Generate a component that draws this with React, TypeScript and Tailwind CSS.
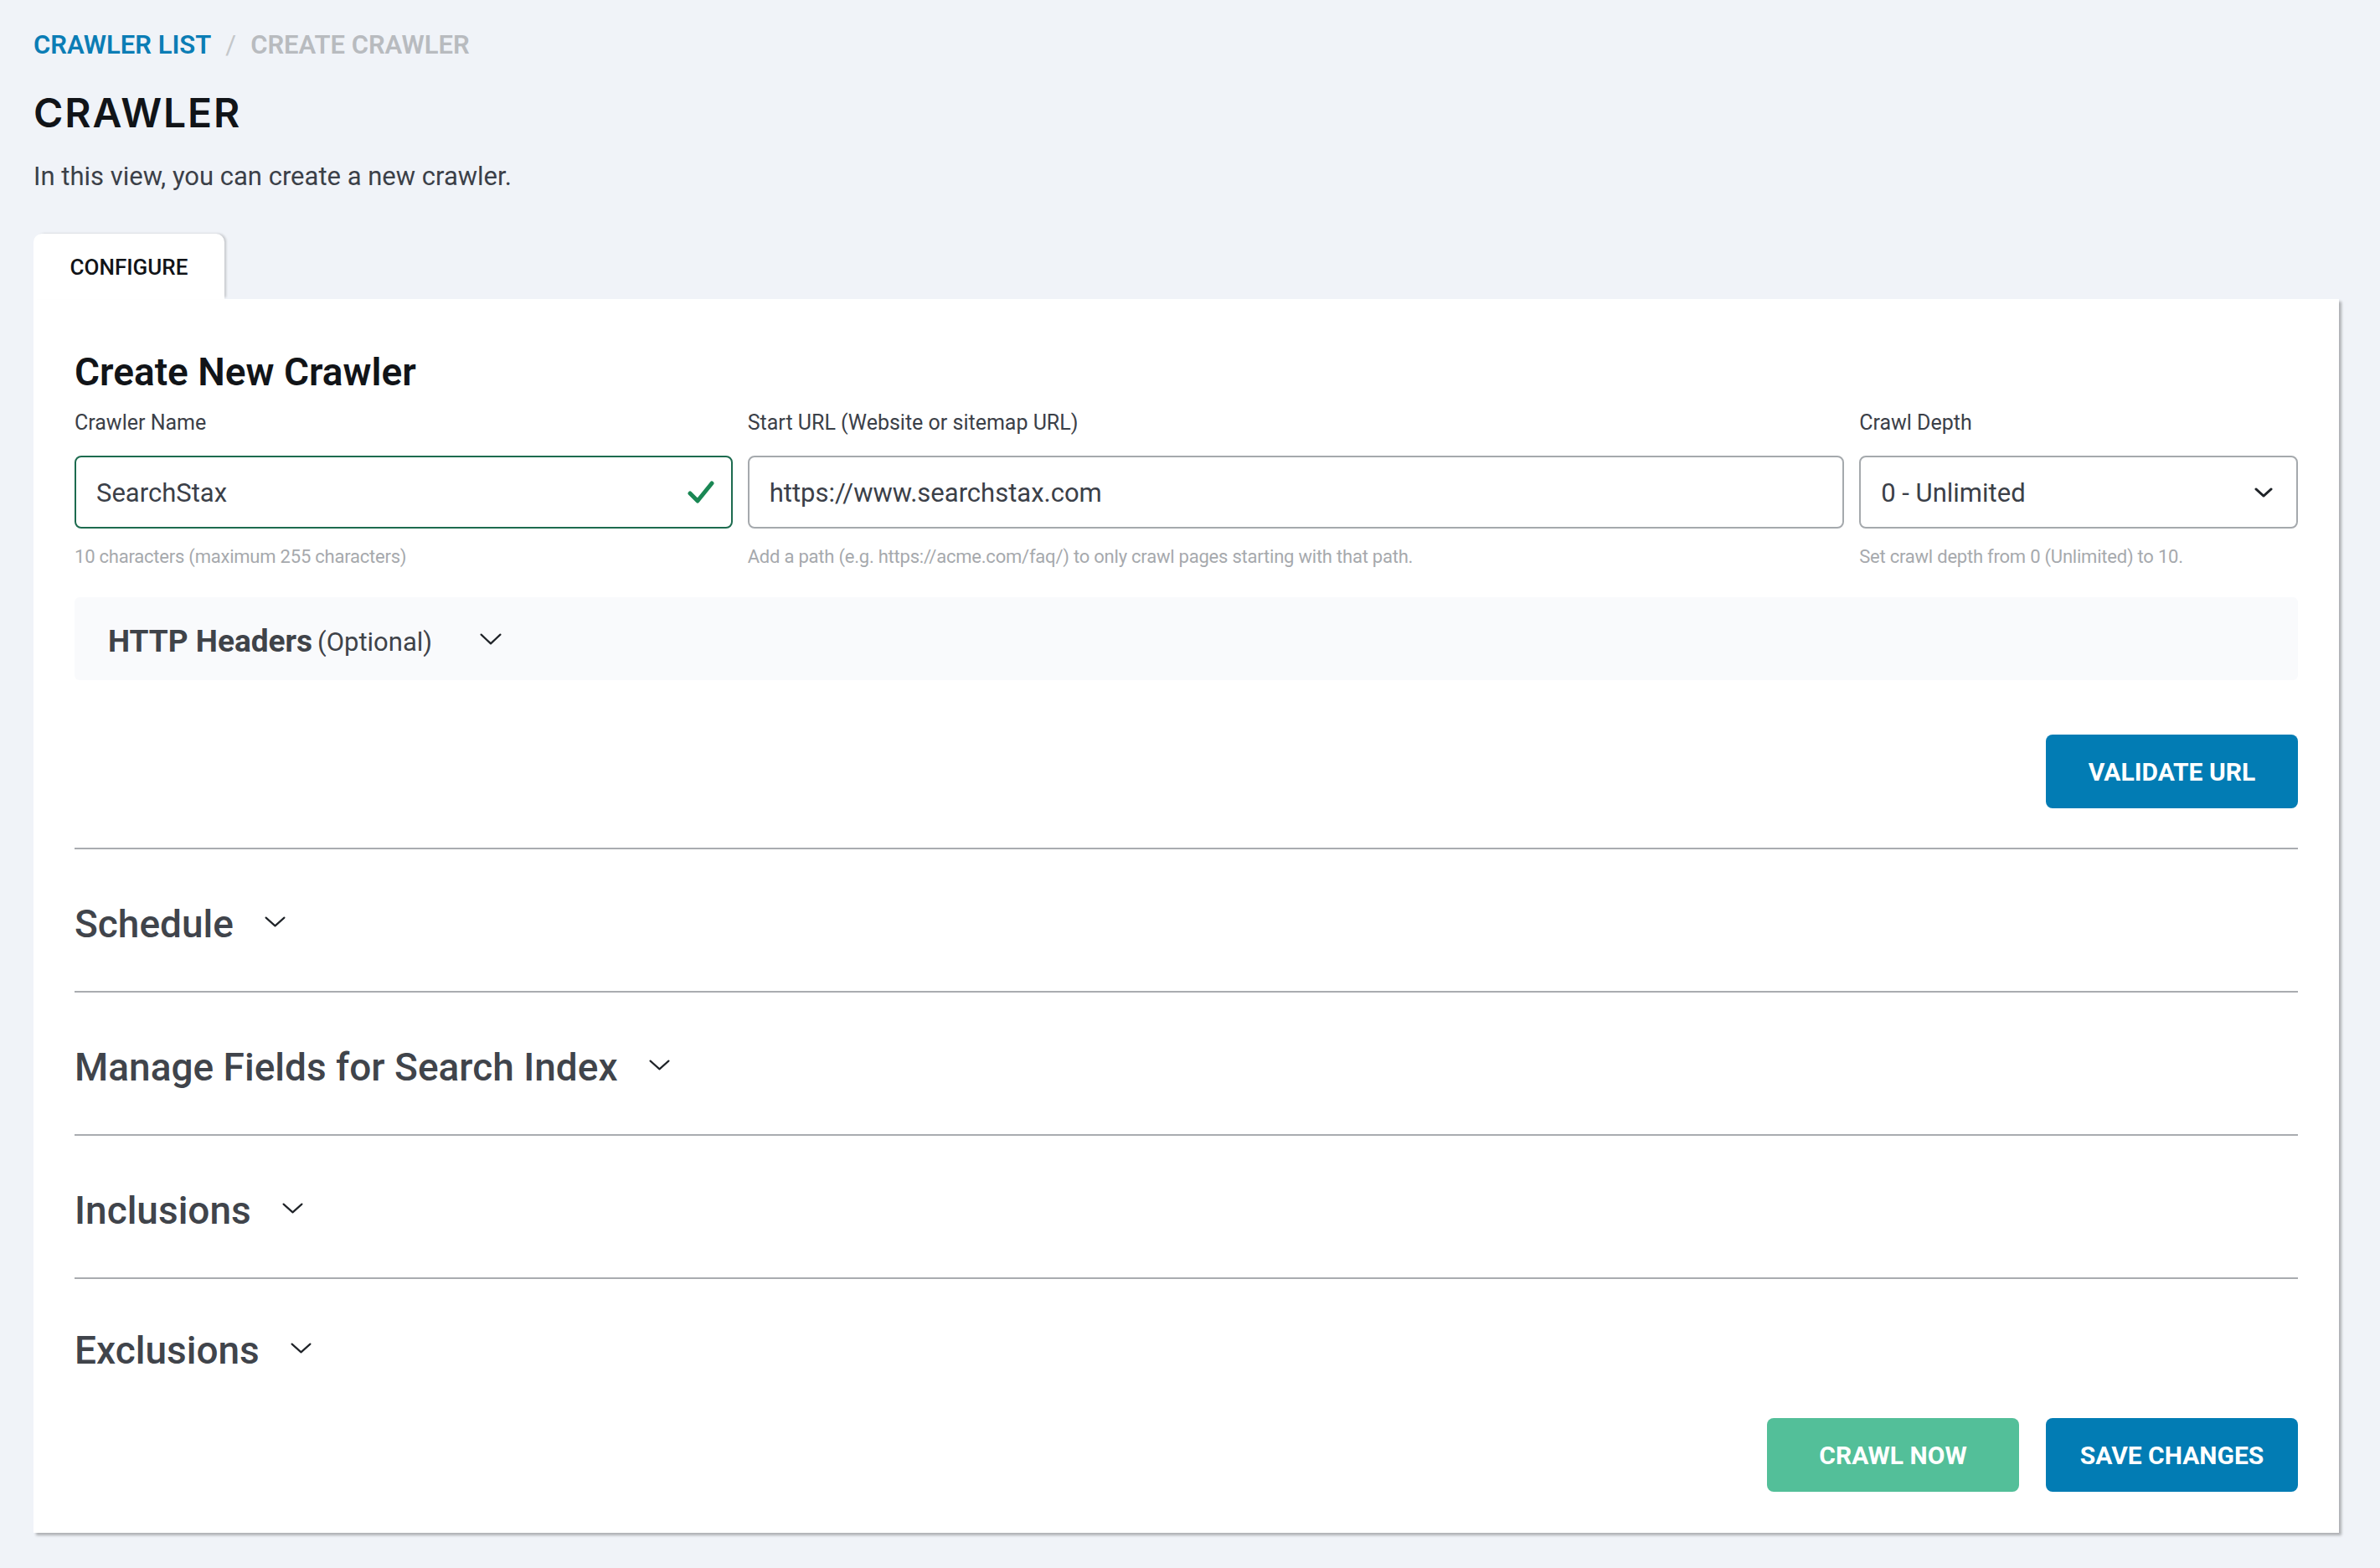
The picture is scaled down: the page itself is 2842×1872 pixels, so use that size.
import React from "react";

function Chevron({
  w = 25,
  h = 13,
  sw = 2.2,
  className = "",
}: {
  w?: number;
  h?: number;
  sw?: number;
  className?: string;
}) {
  const p = sw / 2 + 0.5;
  return (
    <svg width={w} height={h} viewBox={`0 0 ${w} ${h}`} fill="none" className={className}>
      <polyline
        points={`${p},${p} ${w / 2},${h - p} ${w - p},${p}`}
        stroke="currentColor"
        strokeWidth={sw}
        strokeLinecap="round"
        strokeLinejoin="round"
      />
    </svg>
  );
}

function Check() {
  return (
    <svg width="32" height="28" viewBox="0 0 32 28" fill="none">
      <polyline
        points="3,15 12,24 29,3"
        stroke="#1a8754"
        strokeWidth="5"
        strokeLinecap="round"
        strokeLinejoin="round"
      />
    </svg>
  );
}

function Field({
  label,
  helper,
  children,
}: {
  label: string;
  helper: string;
  children: React.ReactNode;
}) {
  return (
    <div className="flex flex-col min-w-0">
      <div className="text-[25px] leading-[25px] text-[#3b4048]">{label}</div>
      <div className="mt-[27px]">{children}</div>
      <div className="mt-[23px] text-[22px] leading-[22px] text-[#a6a9ad] whitespace-nowrap tracking-[-0.01em]">{helper}</div>
    </div>
  );
}

function Section({ title, last = false }: { title: string; last?: boolean }) {
  return (
    <div
      className={
        last
          ? "border-t-2 border-[#a9acb0] pt-[62px] flex items-center gap-[37px]"
          : "border-t-2 border-[#a9acb0] pt-[66px] pb-[57px] flex items-center gap-[37px]"
      }
    >
      <span className="text-[46px] leading-[46px] font-medium text-[#40444b]">{title}</span>
      <Chevron className="text-[#1f2328] mb-[6px]" />
    </div>
  );
}

export default function App() {
  return (
    <div className="min-h-screen bg-[#f0f3f8] pl-[40px] pr-[49px] pt-[38px] pb-[42px] font-[Roboto,sans-serif]">
      <nav className="flex items-center gap-[17px] text-[31px] leading-[31px] font-semibold uppercase">
        <span className="text-[#0b7db5]">Crawler List</span>
        <span className="text-[#c4c7ca] font-normal">/</span>
        <span className="text-[#b8bbbf]">Create Crawler</span>
      </nav>
      <h1 className="mt-[42px] font-[Inter,sans-serif] text-[48px] leading-[48px] font-semibold tracking-[0.04em] text-[#111418]">
        CRAWLER
      </h1>
      <p className="mt-[36px] text-[31px] leading-[31px] text-[#3b4048]">
        In this view, you can create a new crawler.
      </p>

      <div className="mt-[53px] flex">
        <div className="h-[78px] w-[228px] pt-[3px] rounded-t-[10px] bg-white flex items-center justify-center text-[26px] font-medium text-[#111418] shadow-[3px_-1px_3px_-1px_rgba(0,0,0,0.18)]">
          CONFIGURE
        </div>
      </div>

      <div className="bg-white shadow-[3px_3px_3px_rgba(0,0,0,0.28)] px-[49px] pt-[64px] pb-[49px]">
        <h2 className="text-[46px] leading-[46px] font-semibold text-[#111418]">Create New Crawler</h2>

        <div className="mt-[25px] grid grid-cols-[3fr_5fr_2fr] gap-x-[18px]">
          <Field label="Crawler Name" helper="10 characters (maximum 255 characters)">
            <div className="h-[87px] rounded-[8px] border-2 border-[#1d6b4f] flex items-center pl-[24px] pr-[20px]">
              <span className="flex-1 text-[31px] text-[#3b4048] pt-[4px]">SearchStax</span>
              <Check />
            </div>
          </Field>
          <Field
            label="Start URL (Website or sitemap URL)"
            helper="Add a path (e.g. https://acme.com/faq/) to only crawl pages starting with that path."
          >
            <div className="h-[87px] rounded-[8px] border-2 border-[#a5a9ad] flex items-center pl-[24px] pr-[20px]">
              <span className="text-[31px] text-[#3b4048] pt-[4px]">https://www.searchstax.com</span>
            </div>
          </Field>
          <Field label="Crawl Depth" helper="Set crawl depth from 0 (Unlimited) to 10.">
            <div className="h-[87px] rounded-[8px] border-2 border-[#a5a9ad] flex items-center pl-[24px] pr-[28px]">
              <span className="flex-1 text-[31px] text-[#3b4048] pt-[4px]">0 - Unlimited</span>
              <Chevron w={22} h={12} sw={2.8} className="text-[#1f2328]" />
            </div>
          </Field>
        </div>

        <div className="mt-[37px] h-[99px] rounded-[6px] bg-[#f9fafc] flex items-center pl-[40px] pt-[6px]">
          <span className="text-[37px] font-bold text-[#3f4349]">HTTP Headers</span>
          <span className="ml-[6px] text-[31px] text-[#3f4349] mt-[4px]">(Optional)</span>
          <Chevron w={26} h={14} sw={2.2} className="ml-[57px] text-[#1f2328] mb-[6px]" />
        </div>

        <div className="mt-[65px] flex justify-end">
          <button className="h-[88px] w-[301px] rounded-[8px] bg-[#027cb4] text-white text-[30px] font-bold">
            VALIDATE URL
          </button>
        </div>

        <div className="mt-[47px]">
          <Section title="Schedule" />
          <Section title="Manage Fields for Search Index" />
          <Section title="Inclusions" />
          <Section title="Exclusions" last />
        </div>

        <div className="mt-[58px] flex justify-end gap-[32px]">
          <button className="h-[88px] w-[301px] rounded-[8px] bg-[#53bf99] text-white text-[30px] font-bold">
            CRAWL NOW
          </button>
          <button className="h-[88px] w-[301px] rounded-[8px] bg-[#027cb4] text-white text-[30px] font-bold">
            SAVE CHANGES
          </button>
        </div>
      </div>
    </div>
  );
}
